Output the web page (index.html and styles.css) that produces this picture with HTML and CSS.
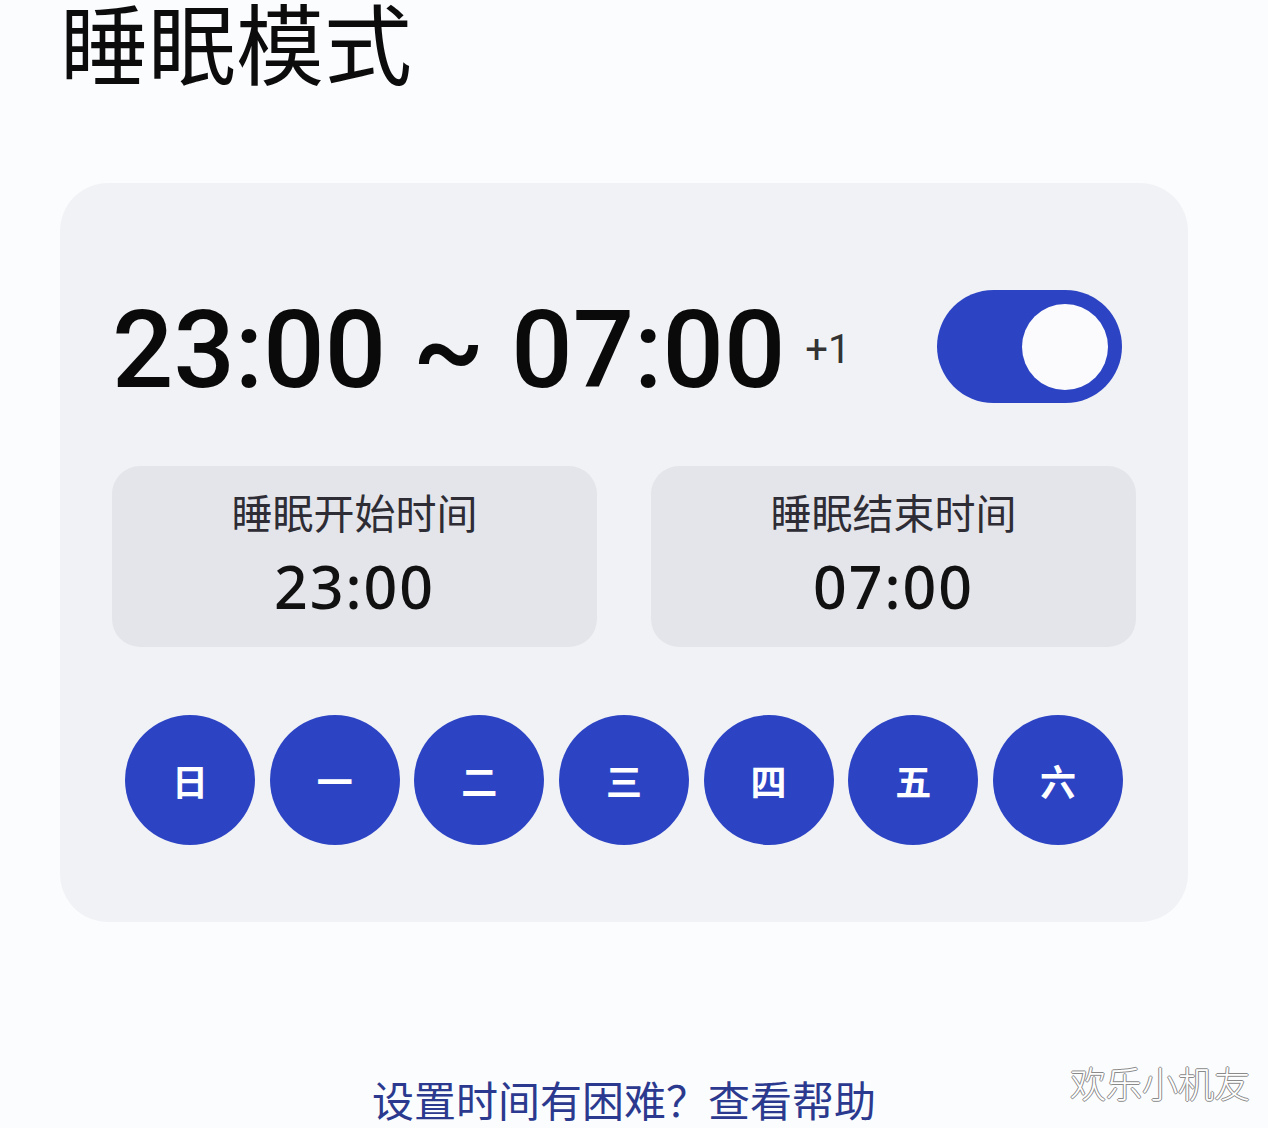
FILE: index.html
```html
<!DOCTYPE html>
<html lang="zh-CN">
<head>
    <meta charset="UTF-8">
    <meta name="viewport" content="width=device-width, initial-scale=1.0">
    <title>睡眠模式</title>
    <link rel="stylesheet" href="styles.css">
</head>
<body>
    <h1 class="page-title">睡眠模式</h1>

    <div class="sleep-card">
        <div class="range-row">
            <div class="range-text">23:00 ~ 07:00<span class="next-day">+1</span></div>
            <button class="switch on" aria-label="睡眠模式开关"><span class="knob"></span></button>
        </div>

        <div class="time-boxes">
            <div class="time-box">
                <div class="time-label">睡眠开始时间</div>
                <div class="time-value">23:00</div>
            </div>
            <div class="time-box">
                <div class="time-label">睡眠结束时间</div>
                <div class="time-value">07:00</div>
            </div>
        </div>

        <div class="days">
            <button class="day active">日</button>
            <button class="day active">一</button>
            <button class="day active">二</button>
            <button class="day active">三</button>
            <button class="day active">四</button>
            <button class="day active">五</button>
            <button class="day active">六</button>
        </div>
    </div>

    <a class="help-link" href="#">设置时间有困难？查看帮助</a>

    <div class="watermark">欢乐小机友</div>
</body>
</html>
```

FILE: styles.css
```css
body {
    margin: 0;
    padding: 0 80px 0 60px;
    background: #fbfcfe;
    color: #111;
    font-family: "Noto Sans CJK SC", "Noto Sans", sans-serif;
    height: 1128px;
    overflow: hidden;
    position: relative;
}
.page-title {
    margin: 0;
    height: 183px;
    font-size: 88px;
    font-weight: 400;
    line-height: 80px;
    color: #0c0c0c;
}
.sleep-card {
    background: #f1f2f5;
    border-radius: 48px;
    padding: 107px 52px 77px;
}
.range-row {
    display: flex;
    align-items: center;
    justify-content: space-between;
    height: 113px;
    padding-right: 14px;
}
.range-text {
    font-family: Roboto, "Noto Sans", sans-serif;
    font-weight: 500;
    font-size: 108px;
    line-height: 1;
    color: #0a0a0a;
    display: flex;
    align-items: flex-start;
    margin-top: 6px;
}
.next-day {
    font-size: 40px;
    font-weight: 400;
    color: #333;
    margin-left: 20px;
    margin-top: 34px;
}
.switch {
    width: 185px;
    height: 113px;
    border: none;
    border-radius: 57px;
    background: #2c44c4;
    padding: 0 14px;
    display: flex;
    align-items: center;
    justify-content: flex-end;
    cursor: pointer;
}
.knob {
    width: 86px;
    height: 86px;
    border-radius: 50%;
    background: #fbfbfd;
}
.time-boxes {
    display: grid;
    grid-template-columns: 1fr 1fr;
    gap: 54px;
    margin-top: 63px;
}
.time-box {
    background: #e4e5ea;
    border-radius: 28px;
    height: 181px;
    box-sizing: border-box;
    padding-top: 21px;
    display: flex;
    flex-direction: column;
    align-items: center;
}
.time-label {
    font-size: 41px;
    line-height: 1.2;
    color: #2e2c34;
}
.time-value {
    font-family: "Noto Sans", Roboto, sans-serif;
    font-weight: 500;
    font-size: 59px;
    line-height: 1.2;
    letter-spacing: 2px;
    color: #111;
    margin-top: 15px;
}
.days {
    display: flex;
    justify-content: space-between;
    margin-top: 68px;
    padding: 0 13px;
}
.day {
    width: 130px;
    height: 130px;
    border-radius: 50%;
    border: none;
    background: #2c44c4;
    color: #fff;
    font-family: "Noto Sans CJK SC", sans-serif;
    font-size: 36px;
    font-weight: 700;
    cursor: pointer;
}
.help-link {
    display: block;
    text-align: center;
    margin-top: 152px;
    font-size: 42px;
    line-height: 1.2;
    color: #2b3a8e;
    text-decoration: none;
}
.watermark {
    position: absolute;
    right: 18px;
    bottom: 20px;
    font-size: 36px;
    font-weight: 300;
    color: #fff;
    text-shadow: 1px 0 #8a8a8a, -1px 0 #8a8a8a, 0 1px #8a8a8a, 0 -1px #8a8a8a;
}
```
